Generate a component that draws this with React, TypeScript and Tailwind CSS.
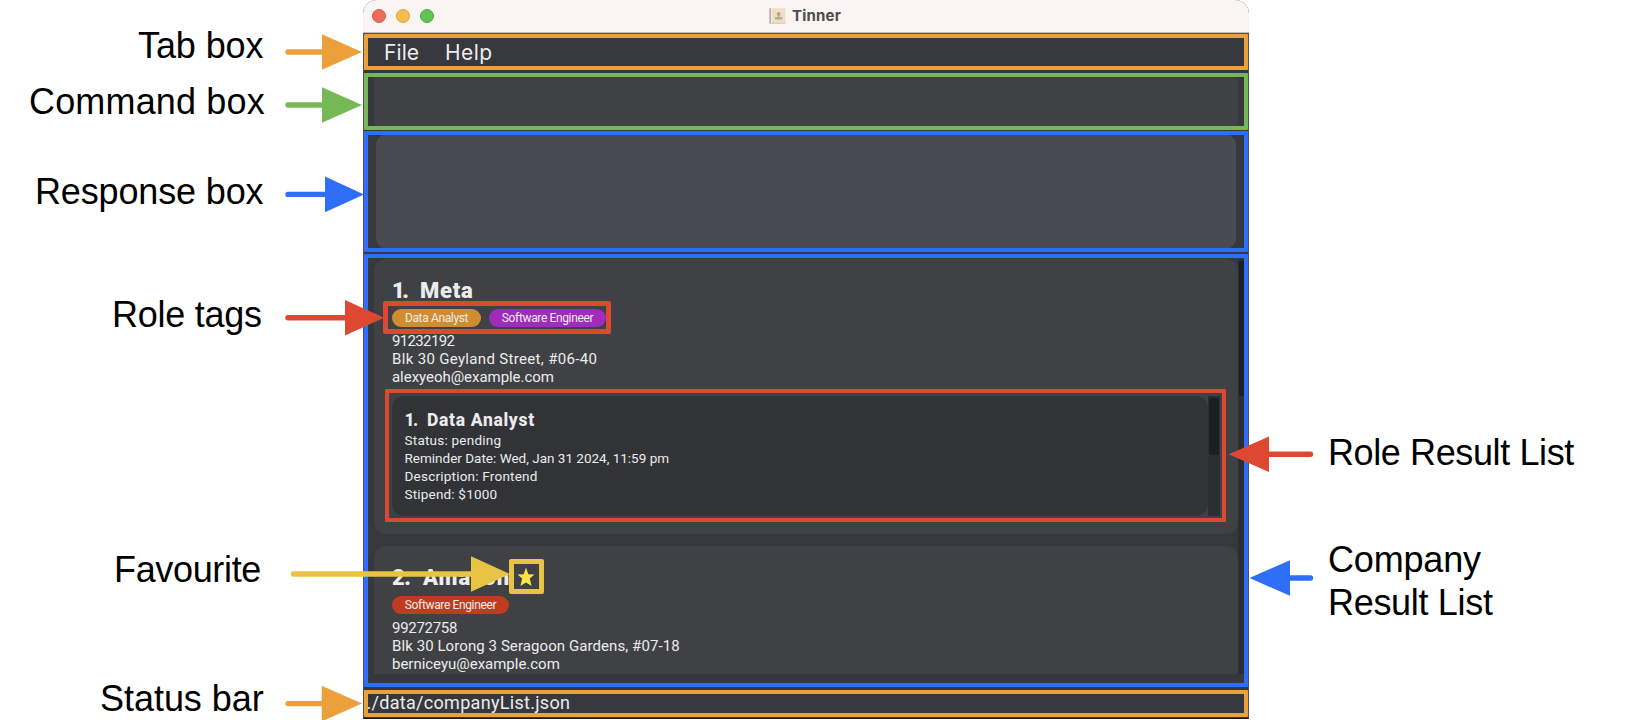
type Tag = { text: string; className: string };

function Pill({ tag }: { tag: Tag }) {
  return (
    <span
      className={`flex h-[18px] items-center justify-center rounded-full text-[12px] leading-[18px] tracking-[-0.36px] ${tag.className}`}
    >
      {tag.text}
    </span>
  );
}

function RoleCard() {
  return (
    <div className="mt-[10px] flex h-[120px] w-[829px]">
      <div className="w-[816px] rounded-[12px] bg-[#323337] pl-[12.5px] pt-[13px]">
        <div className="flex h-[22px] items-center text-[17.5px] font-extrabold leading-[22px]">
          <span className="w-[22.5px] tracking-[-1.5px]">1.</span>
          <span className="tracking-[0.68px]">Data Analyst</span>
        </div>
        <div className="text-[13.5px] leading-[18px]">
          <div className="tracking-[0.23px]">Status: pending</div>
          <div className="tracking-[0px]">Reminder Date: Wed, Jan 31 2024, 11:59 pm</div>
          <div className="tracking-[0.22px]">Description: Frontend</div>
          <div className="tracking-[0.19px]">Stipend: $1000</div>
        </div>
      </div>
      <div className="w-[12px] bg-[#2c2d31] px-px pt-[2px]">
        <div className="h-[57px] rounded-[3px] bg-[#1d1e22]" />
      </div>
    </div>
  );
}

function Star() {
  return (
    <svg width="18" height="20" viewBox="0 0 18 20" className="relative top-[-1px] block">
      <path
        d="M9 0.6 L11.3 7.2 L17.5 7.4 L12.8 11.6 L14.6 19 L9 15.4 L3.4 19 L5.2 11.6 L0.5 7.4 L6.7 7.2 Z"
        fill="#fbe448"
      />
    </svg>
  );
}

function Arrow({ from, base, tip, y, color }: { from: number; base: number; tip: number; y: number; color: string }) {
  return (
    <g fill={color} stroke={color}>
      <line x1={from} y1={y} x2={base} y2={y} strokeWidth="5.4" strokeLinecap="round" />
      <path d={`M${base} ${y - 17.8} L${tip} ${y} L${base} ${y + 17.8} Z`} stroke="none" />
    </g>
  );
}

function Label({ place, children }: { place: string; children: string }) {
  return <div className={`absolute whitespace-nowrap text-[36px] leading-[42px] text-black ${place}`}>{children}</div>;
}

function Window() {
  return (
    <div className="ml-[363px] flex h-[719px] w-[886px] flex-col overflow-hidden rounded-t-[14px] bg-[#37383d] font-[Roboto,sans-serif] text-[#ececec]">
      <header className="relative flex h-[33px] shrink-0 items-center justify-center border-b border-[#c3bebe] bg-[#faf4f3]">
        <div className="absolute left-[9px] top-[9px] flex gap-[10px]">
          <span className="size-[14px] rounded-full border border-[#d95549] bg-[#ec6a5e]" />
          <span className="size-[14px] rounded-full border border-[#dba33c] bg-[#f4bf4f]" />
          <span className="size-[14px] rounded-full border border-[#4caa3c] bg-[#61c554]" />
        </div>
        <div className="flex items-center gap-[6px] pb-px pr-[2px]">
          <svg width="17" height="16" viewBox="0 0 17 16">
            <rect x="0.5" y="0.2" width="16" height="15.4" rx="0.8" fill="#f0dfc0" />
            <rect x="0.4" y="0.2" width="1.8" height="15.4" fill="#b5b0ac" />
            <rect x="2.2" y="0.2" width="0.8" height="15.4" fill="#fbf5ea" />
            <rect x="0.5" y="14.8" width="16" height="0.9" fill="#d2c6b0" />
            <circle cx="9.6" cy="6" r="2" fill="#b3a99d" />
            <path d="M8.8 7 H10.4 V9 H13.2 V11.5 H6 V9 H8.8 Z" fill="#b3a99d" />
          </svg>
          <span className="font-[Inter,sans-serif] text-[15px] font-bold leading-[20px] tracking-[0.24px] text-[#4e4b4b]">Tinner</span>
        </div>
      </header>

      <nav className="flex h-[38px] shrink-0 items-center pl-[21px] pt-[2px] font-[Inter,sans-serif] text-[21px] leading-[36px]">
        <span className="w-[61px] tracking-[0.1px]">File</span>
        <span className="tracking-[0.4px]">Help</span>
      </nav>

      <section className="h-[60px] shrink-0 pl-[11px] pr-[11px] pt-[6px]">
        <div className="h-[49px] rounded-[4px] bg-[#404145]" />
      </section>

      <section className="h-[123px] shrink-0 px-[13px] pt-[3px]">
        <div className="h-[115px] rounded-[11px] bg-[#484b52]" />
      </section>

      <main className="flex h-[420px] shrink-0 overflow-hidden pl-[11px] pt-[5px]">
        <div className="flex w-[864px] flex-col gap-[12px]">
          <article className="h-[275px] shrink-0 rounded-[12px] bg-[#404145] pl-[18px] pt-[17px]">
            <div className="flex h-[30px] items-center text-[22px] font-black leading-[30px]">
              <span className="w-[28px] tracking-[-2.4px]">1.</span>
              <span className="tracking-[0.75px]">Meta</span>
            </div>
            <div className="mt-[3px] flex gap-[8px]">
              <Pill tag={{ text: "Data Analyst", className: "w-[89px] bg-[#cf8d2f]" }} />
              <Pill tag={{ text: "Software Engineer", className: "w-[117px] bg-[#a02bbd]" }} />
            </div>
            <div className="mt-[5px] text-[15px] leading-[18px]">
              <div className="tracking-[-0.65px]">91232192</div>
              <div className="tracking-[0.33px]">Blk 30 Geyland Street, #06-40</div>
              <div className="tracking-[-0.04px]">alexyeoh@example.com</div>
            </div>
            <RoleCard />
          </article>

          <article className="h-[128px] shrink-0 rounded-t-[12px] bg-[#404145] pl-[18px] pt-[17px]">
            <div className="flex h-[30px] items-center text-[22px] font-black leading-[30px]">
              <span className="w-[31px] tracking-[-0.4px]">2.</span>
              <span className="w-[94px] tracking-[1px]">Amazon</span>
              <Star />
            </div>
            <div className="mt-[3px] flex">
              <Pill tag={{ text: "Software Engineer", className: "w-[117px] bg-[#bf3c20]" }} />
            </div>
            <div className="mt-[5px] text-[15px] leading-[18px]">
              <div className="tracking-[-0.3px]">99272758</div>
              <div className="tracking-[0.08px]">Blk 30 Lorong 3 Seragoon Gardens, #07-18</div>
              <div className="tracking-[-0.02px]">berniceyu@example.com</div>
            </div>
          </article>
        </div>
        <div className="h-[415px] w-[11px] bg-[#2c2d31] pl-px pt-[2px]">
          <div className="h-[135px] rounded-[3px] bg-[#1d1e22]" />
        </div>
      </main>

      <footer className="flex h-[45px] shrink-0 items-start pl-[3.5px] pt-[17px] text-[18px] leading-[24px] tracking-[0.3px]">
        ./data/companyList.json
      </footer>
    </div>
  );
}

export default function App() {
  return (
    <div className="relative h-[720px] w-[1640px] overflow-hidden bg-white font-['Liberation_Sans',sans-serif]">
      <Window />

      <div className="absolute left-[363px] top-[33px] h-[686px] w-[886px] border border-[#515257] border-b-[#1b1b1d]" />
      <div className="absolute left-[364px] top-[34px] h-[36px] w-[884px] rounded-[1px] border-4 border-[#eca039]" />
      <div className="absolute left-[364px] top-[73px] h-[57px] w-[884px] rounded-[1px] border-4 border-[#76b856]" />
      <div className="absolute left-[364px] top-[131px] h-[121px] w-[884px] rounded-[1px] border-4 border-[#2f6ef6]" />
      <div className="absolute left-[364px] top-[254px] h-[433px] w-[884px] rounded-[1px] border-4 border-[#2f6ef6]" />
      <div className="absolute left-[364px] top-[690px] h-[27px] w-[884px] rounded-[1px] border-4 border-[#eca039]" />
      <div className="absolute left-[383px] top-[301px] h-[33px] w-[228px] rounded-[2px] border-5 border-[#dc4831]" />
      <div className="absolute left-[385px] top-[389px] h-[133px] w-[841px] rounded-[1px] border-4 border-[#dc4831]" />
      <div className="absolute left-[509px] top-[559px] h-[35px] w-[35px] rounded-[2px] border-5 border-[#e8c444]" />

      <svg className="absolute left-0 top-0" width="1640" height="720" viewBox="0 0 1640 720">
        <Arrow from={288} base={322} tip={362} y={52} color="#eca039" />
        <Arrow from={288} base={322} tip={362} y={105} color="#76b856" />
        <Arrow from={288} base={325} tip={364} y={194.4} color="#2f6ef6" />
        <Arrow from={288} base={345} tip={384} y={317.7} color="#dc4831" />
        <Arrow from={293.5} base={471} tip={510} y={574} color="#e8c444" />
        <Arrow from={288} base={321.7} tip={362} y={703.6} color="#eca039" />
        <Arrow from={1310.5} base={1269} tip={1228.7} y={454.3} color="#dc4831" />
        <Arrow from={1310.5} base={1290} tip={1249.5} y={578} color="#2f6ef6" />
      </svg>

      <Label place="left-[138px] top-[25px] tracking-[-0.1px]">Tab box</Label>
      <Label place="left-[29px] top-[81px] tracking-[0.16px]">Command box</Label>
      <Label place="left-[35px] top-[171px] tracking-[-0.15px]">Response box</Label>
      <Label place="left-[112px] top-[294px] tracking-[-0.26px]">Role tags</Label>
      <Label place="left-[114px] top-[549px] tracking-[-0.34px]">Favourite</Label>
      <Label place="left-[100px] top-[678px] tracking-[-0.04px]">Status bar</Label>
      <Label place="left-[1328px] top-[432px] tracking-[-0.39px]">Role Result List</Label>
      <Label place="left-[1328px] top-[539px] tracking-[-0.18px]">Company</Label>
      <Label place="left-[1328px] top-[582px] tracking-[-0.31px]">Result List</Label>
    </div>
  );
}
